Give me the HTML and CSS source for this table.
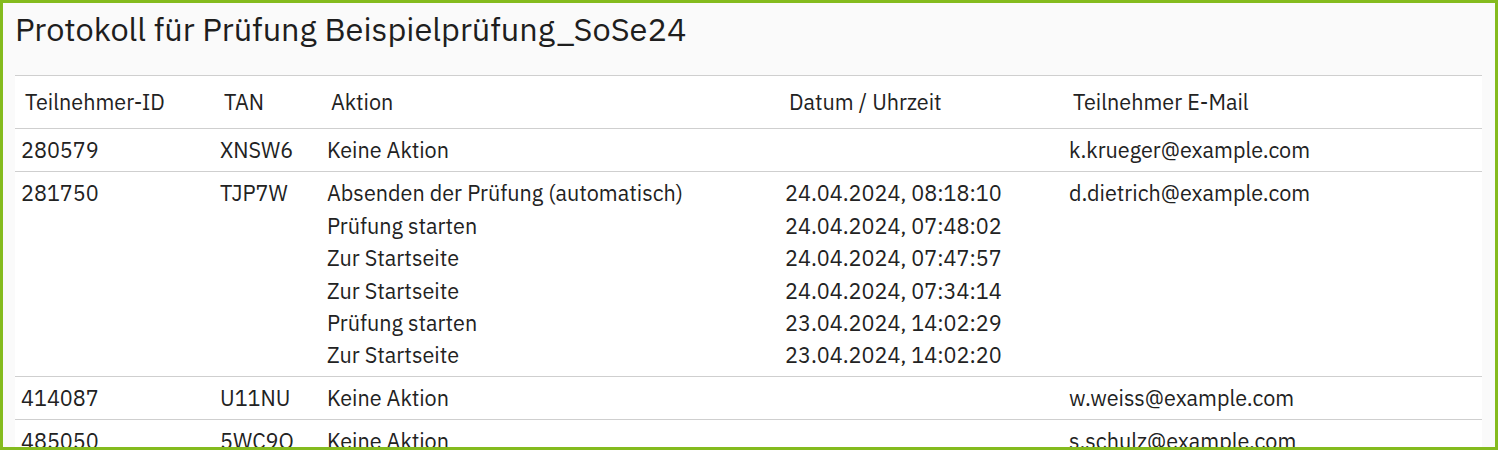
FILE: index.html
```html
<!DOCTYPE html>
<html lang="de">
<head>
<meta charset="utf-8">
<title>Protokoll</title>
<link rel="stylesheet" href="styles.css">
</head>
<body>
<div class="page">
  <h1 class="title">Protokoll für Prüfung Beispielprüfung_SoSe24</h1>
  <table class="log">
    <colgroup>
      <col class="c-id"><col class="c-tan"><col class="c-act"><col class="c-date"><col class="c-mail">
    </colgroup>
    <thead>
      <tr>
        <th>Teilnehmer-ID</th>
        <th>TAN</th>
        <th>Aktion</th>
        <th>Datum / Uhrzeit</th>
        <th>Teilnehmer E-Mail</th>
      </tr>
    </thead>
    <tbody>
      <tr>
        <td>280579</td>
        <td>XNSW6</td>
        <td>Keine Aktion</td>
        <td></td>
        <td>k.krueger@example.com</td>
      </tr>
      <tr>
        <td>281750</td>
        <td>TJP7W</td>
        <td>
          <div>Absenden der Prüfung (automatisch)</div>
          <div>Prüfung starten</div>
          <div>Zur Startseite</div>
          <div>Zur Startseite</div>
          <div>Prüfung starten</div>
          <div>Zur Startseite</div>
        </td>
        <td>
          <div>24.04.2024, 08:18:10</div>
          <div>24.04.2024, 07:48:02</div>
          <div>24.04.2024, 07:47:57</div>
          <div>24.04.2024, 07:34:14</div>
          <div>23.04.2024, 14:02:29</div>
          <div>23.04.2024, 14:02:20</div>
        </td>
        <td>d.dietrich@example.com</td>
      </tr>
      <tr>
        <td>414087</td>
        <td>U11NU</td>
        <td>Keine Aktion</td>
        <td></td>
        <td>w.weiss@example.com</td>
      </tr>
      <tr>
        <td>485050</td>
        <td>5WC9O</td>
        <td>Keine Aktion</td>
        <td></td>
        <td>s.schulz@example.com</td>
      </tr>
    </tbody>
  </table>
</div>
</body>
</html>
```
FILE: styles.css
```css
html, body {
  margin: 0;
  padding: 0;
}
body {
  font-family: "IBM Plex Sans", "Noto Sans", "Liberation Sans", sans-serif;
  color: #222;
}
.page {
  box-sizing: border-box;
  width: 1498px;
  height: 450px;
  overflow: hidden;
  border: 3px solid #84bb1e;
  background: #fafafa;
  padding: 0 13px 0 12px;
}
.title {
  margin: 4px 0 0 0;
  font-size: 32.5px;
  line-height: 44px;
  font-weight: 400;
  color: #1e1e1e;
}
.log {
  margin-top: 24px;
  width: 100%;
  border-collapse: collapse;
  table-layout: fixed;
  background: #fff;
  font-size: 21.6px;
  line-height: 32.4px;
}
.c-id { width: 199px; }
.c-tan { width: 107px; }
.c-act { width: 458px; }
.c-date { width: 284px; }
.log thead tr {
  border-top: 1px solid #cfcfcf;
}
.log tr {
  border-bottom: 1px solid #cfcfcf;
}
.log th {
  text-align: left;
  font-weight: 400;
  padding: 10px 10px;
}
.log td {
  vertical-align: top;
  padding: 5px 6px 4.5px;
  white-space: nowrap;
}
```
